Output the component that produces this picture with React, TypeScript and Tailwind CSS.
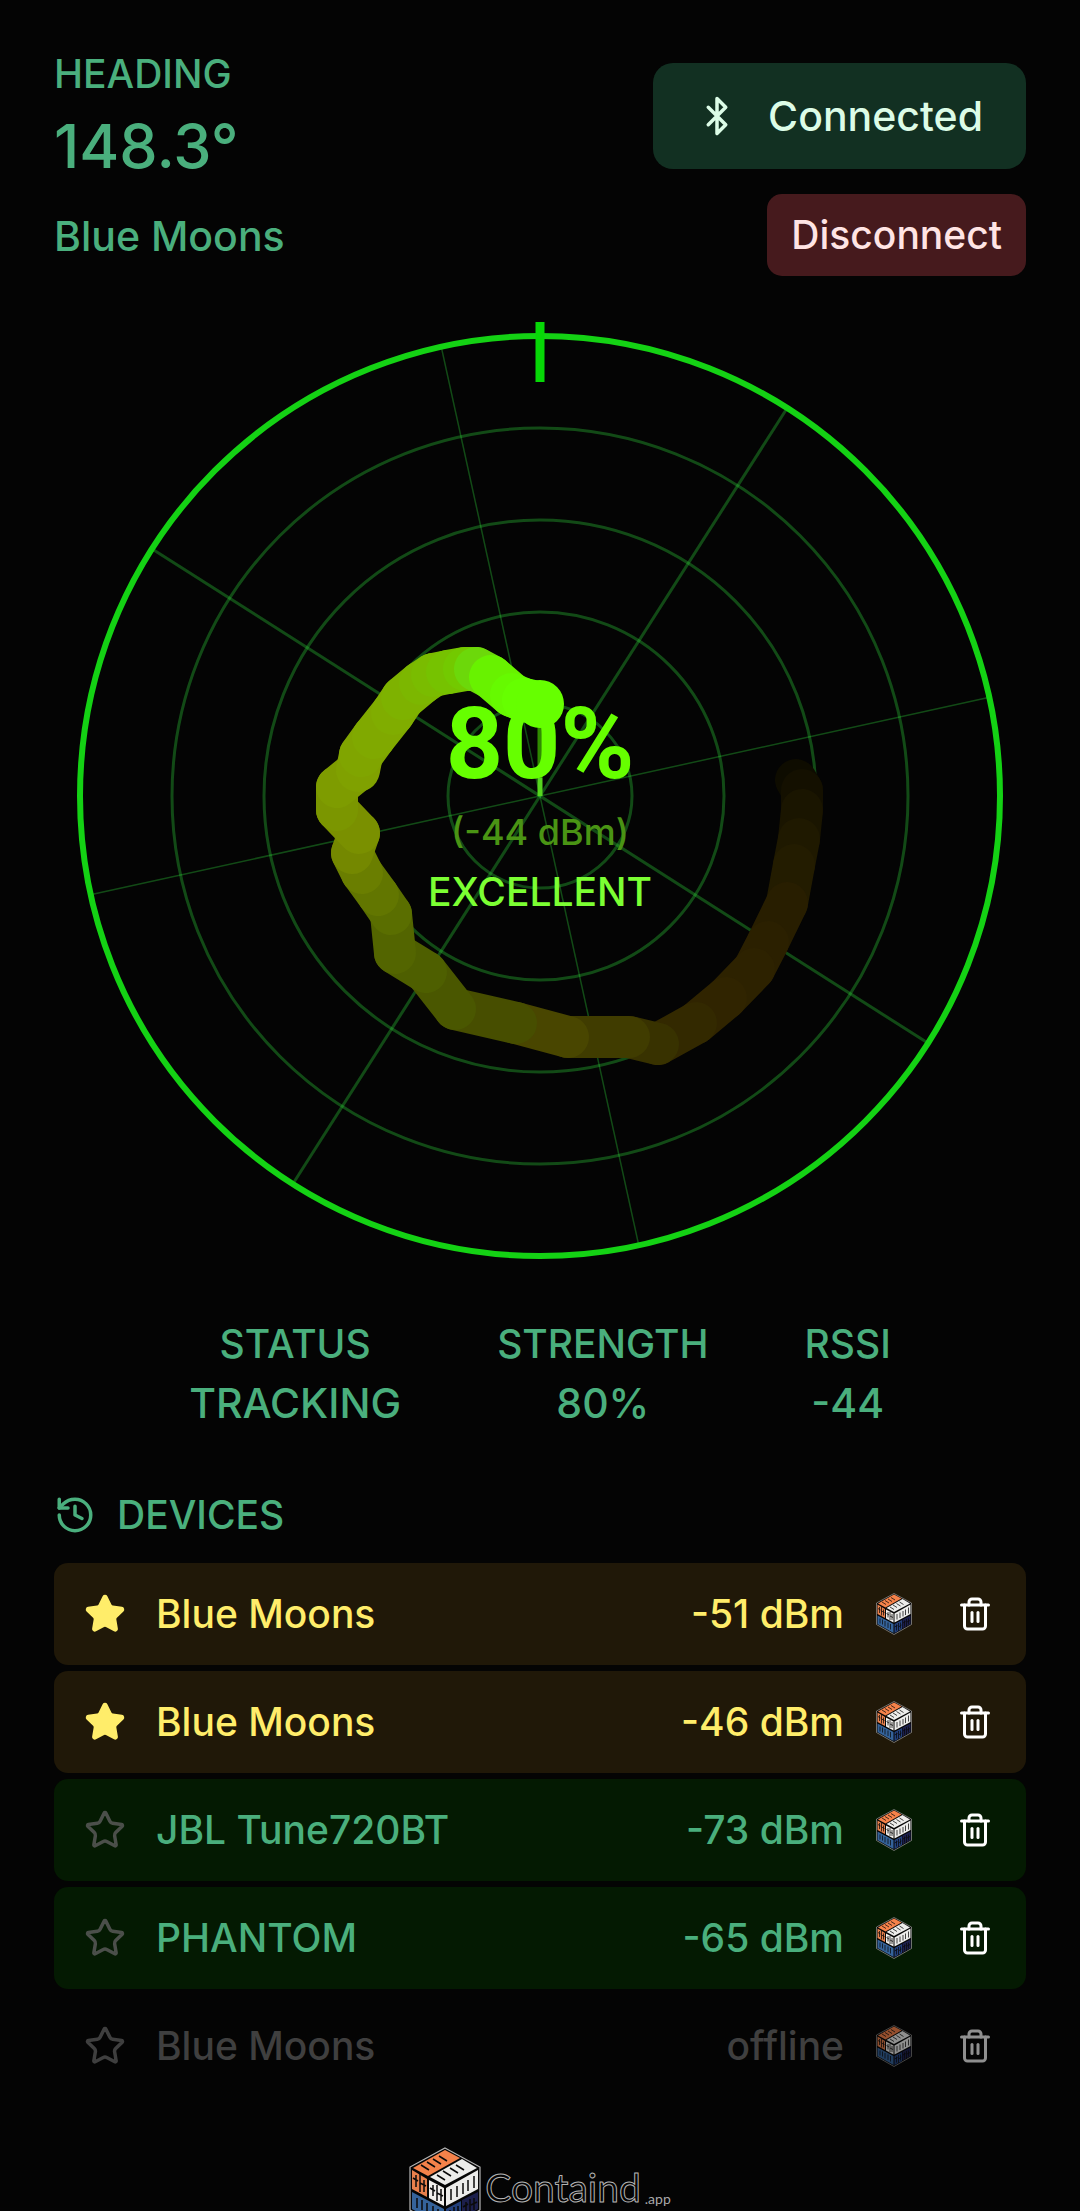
import React from "react";
import { Bluetooth, History, Star, Trash2 } from "lucide-react";
import clsx from "clsx";

type DeviceState = "favorite" | "online" | "offline";

interface IDevice {
  id: number;
  name: string;
  signal: string;
  state: DeviceState;
}

const devices: IDevice[] = [
  { id: 1, name: "Blue Moons", signal: "-51 dBm", state: "favorite" },
  { id: 2, name: "Blue Moons", signal: "-46 dBm", state: "favorite" },
  { id: 3, name: "JBL Tune720BT", signal: "-73 dBm", state: "online" },
  { id: 4, name: "PHANTOM", signal: "-65 dBm", state: "online" },
  { id: 5, name: "Blue Moons", signal: "offline", state: "offline" },
];

const stats = [
  { label: "STATUS", value: "TRACKING" },
  { label: "STRENGTH", value: "80%" },
  { label: "RSSI", value: "-44" },
];

// x, y (from the radar centre), colour; oldest reading first
const trail: [number, number, string][] = [
  [256, -16, "#0b0900"],
  [262, -6, "#0e0c00"],
  [262, 14, "#141000"],
  [259, 43, "#1a1500"],
  [254, 69, "#1f1900"],
  [247, 107, "#231c00"],
  [228, 146, "#281e00"],
  [214, 173, "#2b2000"],
  [186, 202, "#2d2200"],
  [156, 227, "#302400"],
  [118, 248, "#332900"],
  [89, 241, "#383200"],
  [28, 241, "#403c00"],
  [-24, 227, "#494600"],
  [-85, 213, "#474e00"],
  [-114, 176, "#4a5700"],
  [-145, 157, "#4e5f00"],
  [-149, 118, "#536500"],
  [-162, 99, "#5a6e00"],
  [-178, 77, "#627600"],
  [-188, 57, "#6a7e00"],
  [-181, 37, "#748800"],
  [-203, 14, "#7a9000"],
  [-203, -9, "#7b9600"],
  [-182, -26, "#7e9c00"],
  [-179, -41, "#80a100"],
  [-166, -59, "#80a500"],
  [-147, -83, "#80a900"],
  [-137, -98, "#80ad00"],
  [-119, -113, "#7eb200"],
  [-107, -121, "#7cb700"],
  [-92, -124, "#7abc00"],
  [-75, -127, "#76c200"],
  [-64, -127, "#73c900"],
  [-49, -119, "#6cd80a"],
  [-28, -101, "#68f200"],
  [-16, -96, "#66fa00"],
  [-2, -93, "#66ff00"],
];

const CubeIcon = ({ className }: { className?: string }) => (
  <svg viewBox="0 0 72 84" className={className} aria-hidden="true">
    <path d="M36 1 71 20V63L36 83 1 63V20Z" fill="#050505" stroke="#b5b5b5" strokeWidth="1.2" />
    <path d="M36 3 51 11 19 29 4 21Z" fill="#f5824a" />
    <path d="M53 12 68 21 36 38 21 30Z" fill="#ececea" />
    <path d="M3 23 18 32V50L3 42Z" fill="#e8804c" />
    <path d="M20 33 35 41V59L20 51Z" fill="#f1efec" />
    <path d="M37 41 69 23V42L37 59Z" fill="#ececea" />
    <path d="M3 45 35 62V80L3 62Z" fill="#35639a" />
    <path d="M37 62 52 54V72L37 80Z" fill="#23407c" />
    <path d="M53 53 69 45V62L53 71Z" fill="#1c1f4c" />
    <g stroke="#0a0a0a" strokeWidth="1.5" fill="none">
      <path d="M12 18 20 23M18 15 26 20M24 12 32 17M30 9 38 14" />
      <path d="M28 28 36 33M34 24 42 29M41 21 49 26M47 18 55 23" />
      <path d="M7 28V40M11 27V45M15 33V45M4 31 9 34M11 36 17 39" />
      <path d="M24 38V49M28 38V54M32 42V54M21 41 26 44M28 46 34 49" />
      <path d="M42 42V53M48 39V50M54 36V47M59 33V44M65 29V41" />
      <path d="M8 51V61M13 53V63M18 56V67M24 59V70M29 62V73" />
      <path d="M41 63V75M45 60V76M49 59V71M37 68 43 65M45 68 51 64" />
      <path d="M57 55V67M61 52V68M65 51V63M54 60 59 57M62 58 68 55" />
    </g>
  </svg>
);

const Radar = () => (
  <svg viewBox="-486 -480 972 960" className="mt-10 w-full" role="img" aria-label="Signal radar">
    <g fill="none" stroke="#32dc3c" strokeOpacity="0.33" strokeWidth="3">
      {[92, 184, 276, 368].map((r) => (
        <circle key={r} r={r} />
      ))}
    </g>
    <g stroke="#32dc3c" strokeOpacity="0.33">
      {[-57.5, 32.5].map((angle) => (
        <line key={angle} y1="-458" y2="458" strokeWidth="3" transform={`rotate(${angle})`} />
      ))}
      {[-12.4, 77.6].map((angle) => (
        <line key={angle} y1="-458" y2="458" strokeWidth="1.5" transform={`rotate(${angle})`} />
      ))}
    </g>
    <circle r="460" fill="none" stroke="#14d214" strokeWidth="6" />
    <line y1="-474" y2="-414" stroke="#06d806" strokeWidth="9" />

    {trail.slice(1).map(([x, y, color], i) => (
      <line
        key={i}
        x1={trail[i][0]}
        y1={trail[i][1]}
        x2={x}
        y2={y}
        stroke={color}
        strokeWidth={i < 24 ? 42 : 44}
        strokeLinecap="round"
      />
    ))}
    <line y1="-80" y2="-18" stroke="#2f8a00" strokeWidth="5" />
    <line y1="-18" y2="0" stroke="#56d61e" strokeWidth="5" />

    <g textAnchor="middle">
      <text y="-18" fill="#66ff00" className="font-[Roboto,sans-serif] text-[100px] font-bold">
        80%
      </text>
      <text y="49" fill="#4a9414" className="text-[36px]">
        (-44 dBm)
      </text>
      <text y="110" fill="#7cff33" className="text-[39px]">
        EXCELLENT
      </text>
    </g>
    <circle cy="-92" r="24" fill="#66ff00" />
  </svg>
);

const DeviceRow = ({ device }: { device: IDevice }) => {
  const { name, signal, state } = device;
  return (
    <li
      className={clsx(
        "flex h-[102px] items-center rounded-[14px] pr-[33px] pl-[30px]",
        state === "favorite" && "bg-[#201808] text-[#ffed6a]",
        state === "online" && "bg-[#041a02] text-[#4aaf7d]",
        state === "offline" && "text-[#3f3f3f]",
      )}
    >
      <button type="button" aria-label="Toggle favorite">
        <Star
          size={42}
          strokeWidth={2}
          className={clsx(
            state === "favorite" && "fill-current",
            state === "online" && "text-[#4b4f4a]",
          )}
        />
      </button>
      <span className="ml-[30px] flex-1">{name}</span>
      <span>{signal}</span>
      <CubeIcon className={clsx("ml-8 h-[42px] w-9", state === "offline" && "opacity-60")} />
      <button
        type="button"
        aria-label="Delete device"
        className={clsx("ml-[45px]", state === "offline" ? "text-[#8f8f8f]" : "text-white")}
      >
        <Trash2 size={36} strokeWidth={2} />
      </button>
    </li>
  );
};

export default function App() {
  return (
    <main className="h-screen overflow-hidden bg-[#040404] px-[54px] pt-11 font-[Inter,sans-serif] text-[39px] leading-[60px] font-medium text-[#4aaf7d]">
      <header className="flex items-start justify-between">
        <div>
          <div>HEADING</div>
          <div className="text-[61px] leading-[84px]">148.3°</div>
          <div className="mt-[18px] text-[41px]">Blue Moons</div>
        </div>
        <div className="mt-[19px] flex flex-col items-end gap-[25px]">
          <button
            type="button"
            className="flex h-[106px] items-center gap-[30px] rounded-[20px] bg-[#123022] px-[43px] text-[41px] text-[#dcfce7]"
          >
            <Bluetooth size={42} strokeWidth={2} />
            Connected
          </button>
          <button
            type="button"
            className="h-[82px] rounded-[15px] bg-[#461a1d] px-6 text-[#ffe4e4]"
          >
            Disconnect
          </button>
        </div>
      </header>

      <Radar />

      <dl className="mt-[38px] flex justify-center gap-24 text-center">
        {stats.map(({ label, value }) => (
          <div key={label}>
            <dt>{label}</dt>
            <dd className="text-[41px] leading-[58px]">{value}</dd>
          </div>
        ))}
      </dl>

      <section className="mt-[53px]">
        <h2 className="flex items-center gap-[21px]">
          <History size={42} strokeWidth={2} />
          DEVICES
        </h2>
        <ul className="mt-[18px] flex flex-col gap-1.5">
          {devices.map((device) => (
            <DeviceRow key={device.id} device={device} />
          ))}
        </ul>
      </section>

      <footer className="mt-[50px] flex justify-center">
        <a href="#" className="flex items-start font-[Lato,sans-serif] leading-10 font-normal">
          <CubeIcon className="h-[84px] w-[72px]" />
          <span className="mt-5 ml-1 text-[39px] text-[#040404] [-webkit-text-stroke:1px_#b4b4b4]">
            Containd
          </span>
          <span className="mt-8 ml-1 text-sm leading-10 text-[#a8a8a8]">.app</span>
        </a>
      </footer>
    </main>
  );
}
